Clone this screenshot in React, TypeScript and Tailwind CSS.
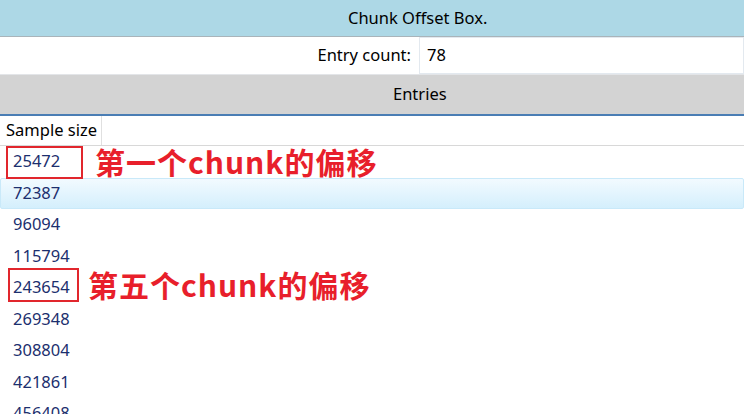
import React from "react";

const rows = ["25472", "72387", "96094", "115794", "243654", "269348", "308804", "421861", "456408", "500000"];

export default function App() {
  return (
    <div className="relative w-[744px] h-[414px] overflow-hidden bg-white" style={{ fontFamily: '"Noto Sans", "Open Sans", sans-serif' }}>
      <div className="h-[37px] bg-[#add8e6] border-b border-[#a9b4ba] flex items-center pl-[348px] text-[16.5px] text-black">
        Chunk Offset Box.
      </div>
      <div className="h-[37px] flex items-center">
        <div className="w-[411px] text-right text-[16.5px] text-black">Entry count:</div>
        <div className="ml-[8px] flex-1 h-[37px] border border-[#e3e9ef] flex items-center pl-[7px] text-[16.5px] text-black">78</div>
      </div>
      <div className="h-[42px] bg-[#d3d3d3] border-t border-[#e3e5e8] border-b-2 border-b-[#4a7db4] flex items-center pl-[393px] text-[16.5px] text-black">
        Entries
      </div>
      <div className="h-[30px] flex border-b border-[#d8d8d8] bg-white">
        <div className="w-[102px] border-r border-[#e0e0e0] flex items-center pl-[6px] text-[16.5px] text-black">Sample size</div>
      </div>
      <div className="flex flex-col">
        {rows.map((r, i) => (
          <div
            key={r}
            className={
              i === 1
                ? "h-[31.5px] flex items-center pl-[12px] text-[16.5px] text-[#1c2f6e] border border-[#c9e9f9] rounded-[2px] bg-gradient-to-b from-[#f2faff] to-[#d4effc]"
                : "h-[31.5px] flex items-center pl-[13px] text-[16.5px] text-[#1c2f6e]"
            }
          >
            {r}
          </div>
        ))}
      </div>
      <div className="absolute left-[6px] top-[146px] w-[77px] h-[33px] border-2 border-[#e1262d]" />
      <div className="absolute left-[8px] top-[268px] w-[71px] h-[34px] border-2 border-[#e1262d]" />
      <div
        className="absolute left-[95px] top-[141px] text-[30px] font-bold text-[#e81f2b] leading-[40px] tracking-[1px]"
        style={{ fontFamily: '"Noto Sans CJK SC", "Noto Sans", sans-serif' }}
      >
        第一个chunk的偏移
      </div>
      <div
        className="absolute left-[88px] top-[264px] text-[30px] font-bold text-[#e81f2b] leading-[40px] tracking-[1px]"
        style={{ fontFamily: '"Noto Sans CJK SC", "Noto Sans", sans-serif' }}
      >
        第五个chunk的偏移
      </div>
    </div>
  );
}
